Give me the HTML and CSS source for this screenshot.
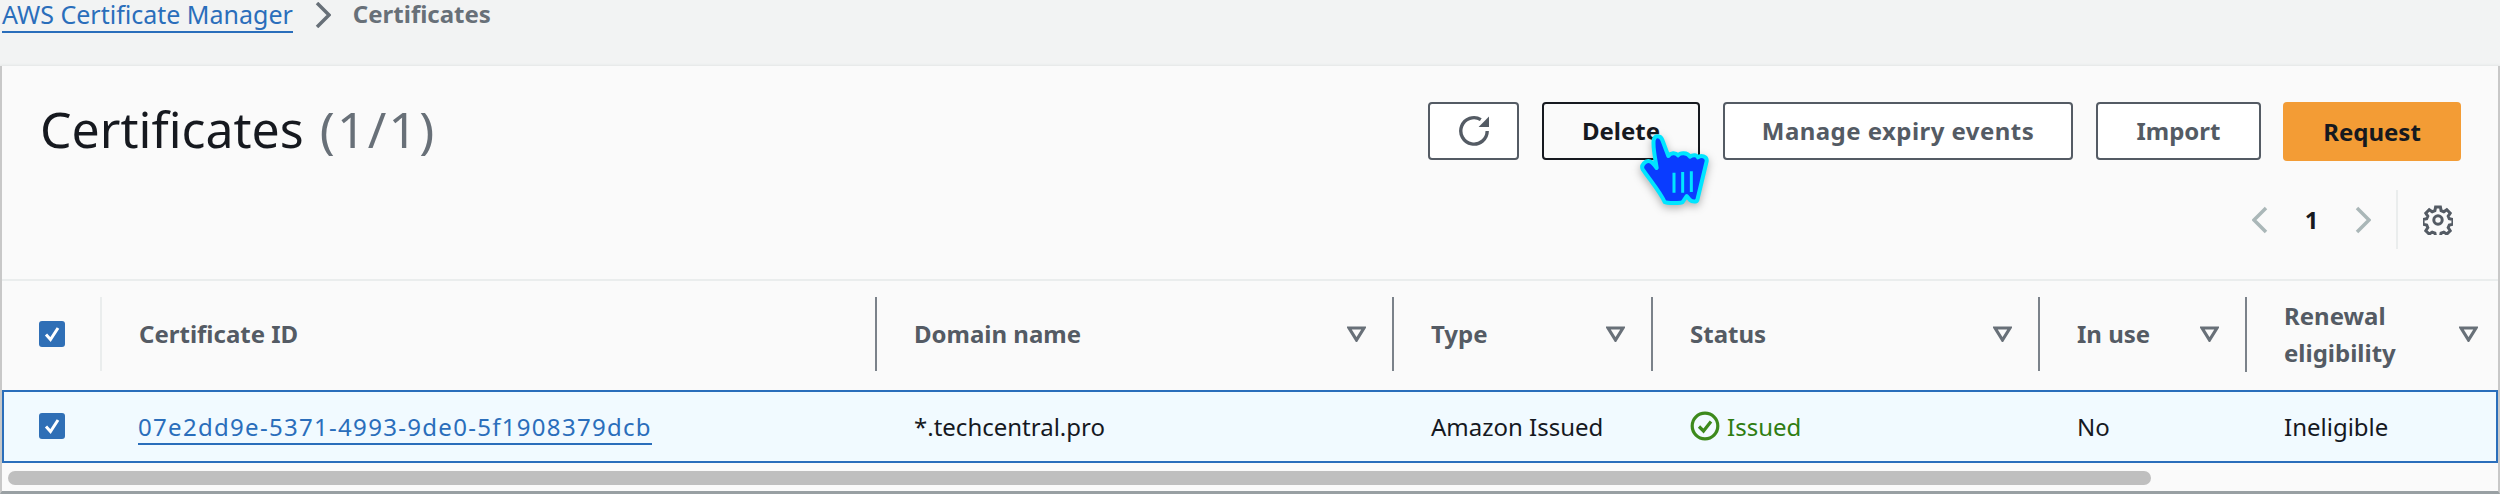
FILE: index.html
```html
<!DOCTYPE html>
<html lang="en">
<head>
<meta charset="utf-8">
<title>Certificates</title>
<link rel="stylesheet" href="styles.css">
</head>
<body>
<nav class="crumbs">
  <a class="crumb-link" href="#">AWS Certificate Manager</a>
  <svg class="crumb-sep" viewBox="0 0 16 26"><path d="M2 1l12 12L2 25"/></svg>
  <span class="crumb-current">Certificates</span>
</nav>
<main class="panel">
  <header class="panel-head">
    <h1 class="title">Certificates <span class="count">(1/1)</span></h1>
    <div class="actions">
      <button class="btn btn-icon"><svg class="ico-refresh" viewBox="0 0 16 16"><path d="M14.6 8a6.6 6.6 0 1 1-3.2-5.7"/><path class="solid" d="M15.500 .8v5.2h-5.2z"/></svg></button>
      <button class="btn btn-hover">Delete</button>
      <button class="btn btn-manage">Manage expiry events</button>
      <button class="btn btn-import">Import</button>
      <button class="btn btn-primary">Request</button>
    </div>
  </header>
  <div class="pager">
    <svg class="chev" viewBox="0 0 16 28"><path d="M14 2L2 14l12 12"/></svg>
    <span class="page-num">1</span>
    <svg class="chev" viewBox="0 0 16 28"><path d="M2 2l12 12L2 26"/></svg>
    <span class="pager-sep"></span>
    <svg class="gear" viewBox="0 0 30 30"><path d="M12.600 2h4.800l.7 3.600 2.700 1.100 3-2 3.400 3.400-2 3 1.100 2.700 3.600.7v4.800l-3.600.7-1.100 2.700 2 3-3.400 3.400-3-2-2.700 1.100-.7 3.600h-4.800l-.7-3.600-2.700-1.100-3 2-3.400-3.400 2-3-1.100-2.700-3.600-.7v-4.800l3.600-.7 1.100-2.700-2-3 3.400-3.400 3 2 2.700-1.100z"/><circle cx="15" cy="15" r="4.200"/></svg>
  </div>
  <section class="table">
    <div class="row row-head">
      <div class="cell cell-check"><span class="check"><svg viewBox="0 0 26 26"><path d="M7 13.500l4.500 5L19 7"/></svg></span></div>
      <div class="cell cell-sep-light th">Certificate ID</div>
      <div class="cell cell-sep th">Domain name<svg class="caret" viewBox="0 0 19 16"><path d="M2 2h15L9.500 14z"/></svg></div>
      <div class="cell cell-sep th">Type<svg class="caret" viewBox="0 0 19 16"><path d="M2 2h15L9.500 14z"/></svg></div>
      <div class="cell cell-sep th">Status<svg class="caret" viewBox="0 0 19 16"><path d="M2 2h15L9.500 14z"/></svg></div>
      <div class="cell cell-sep th">In use<svg class="caret" viewBox="0 0 19 16"><path d="M2 2h15L9.500 14z"/></svg></div>
      <div class="cell cell-sep th th-last"><span class="th-wrap">Renewal eligibility</span><svg class="caret" viewBox="0 0 19 16"><path d="M2 2h15L9.500 14z"/></svg></div>
    </div>
    <div class="row row-selected">
      <div class="cell cell-check"><span class="check"><svg viewBox="0 0 26 26"><path d="M7 13.500l4.500 5L19 7"/></svg></span></div>
      <div class="cell"><a class="cert-link" href="#">07e2dd9e-5371-4993-9de0-5f1908379dcb</a></div>
      <div class="cell">*.techcentral.pro</div>
      <div class="cell">Amazon Issued</div>
      <div class="cell status"><svg class="ok" viewBox="0 0 30 30"><circle cx="15" cy="15" r="12.800"/><path d="M9 15.500l4.500 4.500L21 10.500"/></svg>Issued</div>
      <div class="cell">No</div>
      <div class="cell">Ineligible</div>
    </div>
  </section>
  <div class="scrollbar"><div class="thumb"></div></div>
</main>
<svg class="hand" viewBox="0 0 360 300">
  <path class="hand-shape" d="M161 60C165 44 182 46 187 60L205 108C212 98 226 96 234 106C240 98 262 96 270 110C278 104 290 104 294 112C302 104 322 108 320 124L292 240C290 246 276 246 270 240L260 228L248 246C244 250 200 250 194 246C180 215 150 180 128 148C122 136 136 120 150 124C156 126 164 136 170 144C166 116 158 84 161 60Z"/>
  <path class="hand-lines" d="M222 158v60M248 156v62M274 154v62"/>
</svg>
</body>
</html>
```
FILE: styles.css
```css
* { box-sizing: border-box; }
html, body { margin: 0; padding: 0; }
body {
  width: 2500px;
  height: 494px;
  overflow: hidden;
  background: #f2f3f3;
  color: #16191f;
  font-family: "Noto Sans", "Open Sans", sans-serif;
  font-size: 24px;
  position: relative;
}
.crumbs {
  height: 66px;
  padding: 0 0 0 2px;
  display: flex;
  align-items: flex-start;
  line-height: 28px;
}
.crumb-link {
  color: #2a6ebb;
  font-size: 25px;
  text-decoration: none;
  border-bottom: 2px solid #2a6ebb;
  height: 33px;
}
.crumb-sep {
  width: 16px;
  height: 26px;
  margin: 2px 22px 0 22px;
  fill: none;
  stroke: #687078;
  stroke-width: 3.5;
}
.crumb-current { color: #687078; font-weight: 700; }
.panel {
  height: 428px;
  background: #fafafa;
  border-left: 2px solid #c8c8c8;
  border-right: 2px solid #c8c8c8;
  border-bottom: 3px solid #99a0a3;
  box-shadow: 0 -1px 2px #e4e6e6;
}
.panel-head {
  display: flex;
  justify-content: space-between;
  align-items: flex-start;
  padding: 36px 37px 0 38px;
}
.title {
  margin: -3px 0 0;
  font-size: 50px;
  font-weight: 400;
  line-height: 60px;
}
.count { color: #687078; letter-spacing: 2.2px; margin-left: 3px; }
.actions { display: flex; gap: 23px; height: 59px; }
.btn {
  font: 700 24px/1 "Noto Sans", "Open Sans", sans-serif;
  height: 58px;
  padding: 0;
  border: 2px solid #545b64;
  border-radius: 4px;
  background: #fff;
  color: #545b64;
  display: flex;
  align-items: center;
  justify-content: center;
}
.btn-icon { width: 91px; }
.btn-hover { width: 158px; color: #16191f; background: #fafafa; border-color: #16191f; }
.btn-manage { width: 350px; letter-spacing: .45px; }
.btn-import { width: 165px; }
.btn-primary { width: 178px; height: 59px; margin-left: -1px; background: #f39c35; border: 0; color: #16191f; }
.ico-refresh { width: 32px; height: 32px; fill: none; stroke: #545b64; stroke-width: 1.7; }
.ico-refresh .solid { fill: #545b64; stroke: none; }
.pager {
  display: flex;
  align-items: center;
  justify-content: flex-end;
  height: 59px;
  margin-top: 29px;
  margin-bottom: 30px;
  padding-right: 45px;
}
.chev { width: 16px; height: 28px; fill: none; stroke: #aab7b8; stroke-width: 3.5; }
.page-num { font-weight: 700; width: 87px; text-align: center; }
.pager-sep { width: 2px; height: 59px; background: #eaeded; margin: 0 25px; }
.gear { width: 30px; height: 30px; fill: none; stroke: #545b64; stroke-width: 3; }
.table { border-top: 2px solid #eaeded; }
.row {
  display: grid;
  grid-template-columns: 98px 775px 517px 259px 387px 207px 253px;
  align-items: center;
}
.row-head { height: 109px; font-weight: 700; color: #545b64; }
.row-selected {
  height: 73px;
  background: #f1faff;
  border: 2px solid #2a6ebb;
  grid-template-columns: 97px 775px 517px 259px 387px 207px 250px;
  padding-bottom: 1px;
}
.cell { padding-left: 38px; position: relative; line-height: 37px; }
.cell-check { padding-left: 37px; display: flex; }
.row-head .cell-check { margin-top: -3px; }
.row-selected .cell-check { padding-left: 35px; }
.row-selected .cell:nth-child(2) { padding-left: 37px; }
.check {
  width: 26px;
  height: 26px;
  border-radius: 3px;
  background: #2f6fb6;
  display: block;
}
.check svg { display: block; width: 26px; height: 26px; fill: none; stroke: #fff; stroke-width: 3; }
.th { display: flex; align-items: center; justify-content: space-between; padding: 0 26px 1px 37px; min-height: 74px; margin-top: -3px; }
.cell-sep { border-left: 2px solid #7b828a; }
.cell-sep-light { border-left: 2px solid #eaeded; }
.th-wrap { width: 160px; }
.th-last { padding-right: 20px; }
.caret { width: 19px; height: 16px; fill: none; stroke: #687078; stroke-width: 3.2; flex: none; }
.cert-link { color: #2a6ebb; letter-spacing: 1.3px; text-decoration: none; border-bottom: 2px solid #2a6ebb; display: inline-block; line-height: 33px; }
.status { color: #2f7d12; display: flex; align-items: center; gap: 7px; }
.ok { width: 30px; height: 30px; fill: none; stroke: #3d8a1c; stroke-width: 3.2; }
.scrollbar { padding: 8px 0 0 6px; }
.thumb { width: 2143px; height: 14px; border-radius: 7px; background: #bfbfbf; }
.hand {
  position: absolute;
  left: 1600px;
  top: 120px;
  width: 120px;
  height: 100px;
  filter: drop-shadow(0 3px 4px rgba(0, 0, 0, .3));
}
.hand-shape { fill: #0a3cff; stroke: #00e5ff; stroke-width: 12; stroke-linejoin: round; }
.hand-lines { fill: none; stroke: #00e5ff; stroke-width: 9; }
```
